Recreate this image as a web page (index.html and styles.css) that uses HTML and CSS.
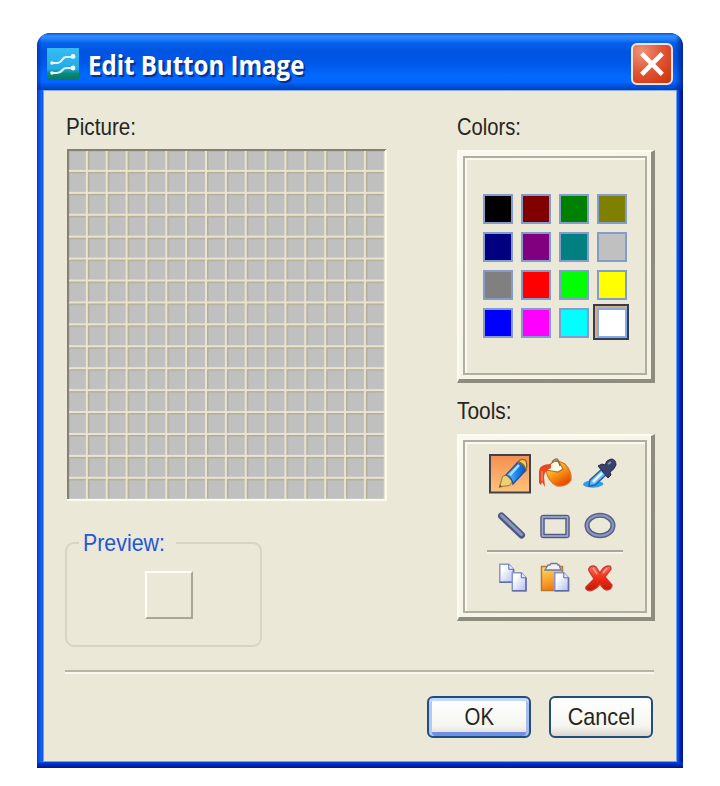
FILE: index.html
```html
<!DOCTYPE html>
<html lang="en">
<head>
<meta charset="utf-8">
<title>Edit Button Image</title>
<link rel="stylesheet" href="styles.css">
</head>
<body>
<main class="window">
  <header class="titlebar">
    <svg class="app-icon" width="32" height="32" viewBox="0 0 32 32">
      <defs><linearGradient id="sky" x2="0" y2="1"><stop offset="0" stop-color="#35bdf5"/><stop offset=".65" stop-color="#26a9e2"/><stop offset=".8" stop-color="#078b78"/><stop offset="1" stop-color="#087564"/></linearGradient></defs>
      <path fill="url(#sky)" d="M0 0h32v32H0z"/>
      <path fill="none" stroke="#d9f4ff" stroke-width="2.200" stroke-linecap="round" d="M5 15h5q3 0 5-3t4-3h7M5 25h5q3 0 5-2.500t4-2.500h7"/>
      <g fill="#effbff"><circle cx="26" cy="8.500" r="2.400"/><circle cx="26" cy="20" r="2.400"/><circle cx="5" cy="15" r="1.800"/><circle cx="5" cy="25" r="1.800"/></g>
    </svg>
    <h1 class="title">Edit Button Image</h1>
    <button class="close" aria-label="Close">
      <svg width="26" height="26" viewBox="0 0 24 24"><path d="M2.500 2.500l19 19M21.500 2.500l-19 19" stroke="#fff" stroke-width="4.200"/></svg>
    </button>
  </header>
  <div class="content">
    <div class="columns">
      <section class="left">
        <h2 class="label picture-label">Picture:</h2>
        <svg class="pixel-grid" width="320" height="352" viewBox="0 0 320 352">
          <defs>
            <pattern id="cell" x="1" y="1" width="19.86" height="21.92" patternUnits="userSpaceOnUse">
              <path fill="#c0c0c0" d="M0 0h20v22H0z"/>
              <path fill="#b3ae98" d="M0 0h1.500v22H0zM0 0h20v1.500H0z"/>
              <path fill="#e8e4ce" d="M17.860 0h2v22h-2zM0 19.920h20v2H0z"/>
            </pattern>
          </defs>
          <path fill="#c0c0c0" d="M1 1h318v350H1z"/>
          <path fill="url(#cell)" d="M1 1h317v349H1z"/>
          <path fill="#838374" d="M0 0h319v2H2v348H0z"/>
          <path fill="#fcfaf0" d="M318 1h2v351H0v-2h318z"/>
        </svg>
        <fieldset class="preview">
          <legend><span class="label preview-label">Preview:</span></legend>
          <div class="preview-tile"></div>
        </fieldset>
      </section>
      <section class="right">
        <h2 class="label colors-label">Colors:</h2>
        <div class="panel colors-panel"><div class="panel-inner">
          <div class="swatches">
            <i class="swatch black"></i><i class="swatch maroon"></i><i class="swatch green"></i><i class="swatch olive"></i>
            <i class="swatch navy"></i><i class="swatch purple"></i><i class="swatch teal"></i><i class="swatch silver"></i>
            <i class="swatch gray"></i><i class="swatch red"></i><i class="swatch lime"></i><i class="swatch yellow"></i>
            <i class="swatch blue"></i><i class="swatch fuchsia"></i><i class="swatch aqua"></i><i class="swatch white selected"></i>
          </div>
        </div></div>
        <h2 class="label tools-label">Tools:</h2>
        <div class="panel tools-panel"><div class="panel-inner">
          <svg class="tools" width="180" height="170" viewBox="465 442 180 170">
            <defs>
              <linearGradient id="hot" x2="0" y2="1"><stop stop-color="#f58e50"/><stop offset="1" stop-color="#ffc47c"/></linearGradient>
              <linearGradient id="blue"><stop stop-color="#73c8ff"/><stop offset=".5" stop-color="#2589ed"/><stop offset="1" stop-color="#0751bd"/></linearGradient>
              <linearGradient id="paint" x2=".6" y2="1"><stop stop-color="#ffe48a"/><stop offset=".45" stop-color="#ffad1c"/><stop offset="1" stop-color="#e94a00"/></linearGradient>
              <linearGradient id="board" x2=".3" y2="1"><stop stop-color="#ffe063"/><stop offset="1" stop-color="#f47c10"/></linearGradient>
              <linearGradient id="paper" x2="1" y2="1"><stop offset=".25" stop-color="#fff"/><stop offset="1" stop-color="#b2bdef"/></linearGradient>
              <linearGradient id="cross" x2="0" y2="1"><stop stop-color="#f77061"/><stop offset=".5" stop-color="#f02d15"/><stop offset="1" stop-color="#c91408"/></linearGradient>
              <g id="sheet"><path fill="url(#paper)" stroke="#8795ce" stroke-width="1.500" d="M.8.8h9l4.700 5v13H.8z"/><path fill="#e7ebff" stroke="#5968a5" d="M9.800.8v5h4.700"/><path fill="none" stroke="#626da5" stroke-width="1.500" d="M14.500 5.800v13H.8"/></g>
            </defs>
            <path fill="url(#hot)" stroke="#40434b" stroke-width="2" d="M490 455h40v37.500h-40z"/>
            <path fill="#f0cf79" stroke="#a58b4d" stroke-width="1.300" d="M499.500 487l3-10.500 4-1.500 6 6-3 4.500z"/><path fill="#635443" d="M499 487.500l1-3 2 2z"/>
            <path fill="url(#blue)" stroke="#274f91" stroke-width="1.300" d="M506 475l12-13q7 1 8 8l-13 14q-1-7-7-9z"/>
            <path fill="#f4cd50" stroke="#846a35" stroke-width="1.300" d="M518 462q3-4 7-2 3 3 1 10-2-7-8-8z"/><path stroke="#a8e0ff" stroke-width="2.500" d="M510 475l9-10"/>

            <path fill="url(#paint)" stroke="#d87825" stroke-width="1.200" d="M546 470l10-10 9 4q7 8 6 16-4 7-14 6-9-4-11-16z"/>
            <path fill="#fffce8" stroke="#9c793d" stroke-width="1.200" d="M546 470q3-6 9-9l4 1 4 7-5 3-6-1z"/>
            <path fill="none" stroke="#806c56" stroke-width="1.300" d="M552 462q4-5 6-2l2 6"/>
            <path fill="#e84722" d="M551 464q-12 0-12 8v11l2 2 1-3 3 5-1-10q0-6 7-9z"/>
            <path stroke="#ff8763" stroke-width="1.300" d="M542 471v10"/>

            <path fill="#2a9ff0" d="M583 484q3-5 14-3 8 1 6 4-6 4-16 2-4-1-4-3z"/>
            <path fill="#63b9fa" stroke="#315da2" stroke-width="1.500" d="M589 486l1-6 12-11 5 5-12 11z"/>
            <path fill="#39416d" stroke="#28294b" d="M598 466l4-2 3 1q1-5 6-6 5 0 5 6-2 5-6 7l1 3-3 3z"/><path stroke="#8991bb" stroke-width="2" d="M608 464l3-2"/><path stroke="#e3f8ff" stroke-width="2.500" d="M593 482l9-9"/>

            <g fill="none" stroke-linecap="round">
              <path stroke="#4e5887" stroke-width="7" d="M501.500 516l20 19"/><path stroke="#8b96bb" stroke-width="3" d="M501.500 515.500l20 19"/>
              <rect x="542.500" y="517" width="25" height="19" rx="1" stroke="#505b89" stroke-width="4.500"/><rect x="542.500" y="517" width="25" height="19" stroke="#a2abc8" stroke-width="1.600"/>
              <ellipse cx="600" cy="525.500" rx="13" ry="10.300" stroke="#56608c" stroke-width="5"/><ellipse cx="600" cy="525.500" rx="13" ry="10.300" stroke="#8f99bb" stroke-width="2"/>
            </g>
            <path fill="#a8a796" d="M487 550h136v2H487z"/><path fill="#faf8ee" d="M487 552h136v1.500H487z"/>
            <use href="#sheet" x="499" y="563.500"/><use href="#sheet" x="511.500" y="572"/>
            <path fill="url(#board)" stroke="#b37930" stroke-width="1.500" d="M541.500 566.500h21v24h-21z"/>
            <path fill="#eef0fa" stroke="#737896" stroke-width="1.300" d="M545 570l3-5h2l1-1.500h6l1 1.500h1l2 5z"/>
            <use href="#sheet" x="554" y="572"/>
            <path fill="url(#cross)" stroke="#c73a2c" stroke-width="1.300" d="M590 567q3-2 6 0l4 6q3-6 8-7 3-1 3 3l-6 8 7 8q0 5-6 5-3-1-6-6-3 4-7 6-5 2-7-1-1-2 2-4l6-6-5-8q-1-2 1-4z"/>
            <path stroke="#ff9c86" stroke-width="1.500" d="M593 568l4 6m10-6l-4 5"/>
          </svg>
        </div></div>
      </section>
    </div>
    <hr class="divider">
    <footer class="actions">
      <button class="btn default"><span class="label ok-label">OK</span></button>
      <button class="btn"><span class="label cancel-label">Cancel</span></button>
    </footer>
  </div>
</main>
</body>
</html>
```
FILE: styles.css
```css
* { box-sizing: border-box; }
body { margin: 0; padding: 33px 37px 0; background: #fff; font-family: "Liberation Sans", sans-serif; }
.window {
  width: 646px; height: 735px; border-radius: 13px 13px 0 0; overflow: hidden;
  padding: 0 6px 6px;
  background: linear-gradient(transparent 729px, rgba(0,54,213,.95) 730px, #0029b4 732px, #001488 735px),
    linear-gradient(90deg, #0238c8 0, #0b5af0 3px, #1763ee 5px, #0648d8 7px, #0648d8 639px, #1052ea 641px, #0024b4 643px, #00138c 100%);
  display: flex; flex-direction: column;
}
.titlebar {
  height: 57px; flex: none; margin: 0 -6px; padding: 0 10px; display: flex; align-items: center;
  border-radius: 13px 13px 0 0;
  background: linear-gradient(90deg, rgba(0,34,170,.6), transparent 5px, transparent 638px, rgba(0,20,130,.75)),
    linear-gradient(#0a50d6 0, #318cff 3px, #2280fa 6px, #0660ea 10px, #0054e1 18px, #0056e7 29px, #0268fc 42px, #0267ff 49px, #0051dc 53px, #0040bd 57px);
}
.app-icon { margin-top: 4px; flex: none; }
.title {
  margin: 7px auto 0 9px; color: #fff; font: bold 26px/36px "Open Sans", sans-serif; white-space: nowrap;
  text-shadow: 2px 2px 1px #062f94; width: 220px; transform: scaleX(.925); transform-origin: 0 50%;
}
.close {
  width: 42px; height: 42px; margin: 5px 0 0; padding: 0; border: 2px solid #f3e4ec; border-radius: 6px;
  background: radial-gradient(circle at 22% 18%, #ee9476, #e2583a 45%, #d63d16 80%, #bd3416); display: grid; place-items: center;
}
.content {
  flex: 1; min-height: 0; background: #ebe8d8; border: 1px solid #6da0ea; border-top-color: #8eb1e4;
  padding: 21px 23px 0 21px;
}
.columns { display: flex; justify-content: space-between; height: 558px; margin-right: -2px; }
.left { width: 321px; }
.right { width: 198px; }
.label { display: block; margin: 0; font-weight: normal; font-size: 24px; line-height: 30px; color: #25251f; white-space: nowrap; transform-origin: 0 50%; width: max-content; }
.picture-label { margin-left: 1px; transform: scaleX(.86); }
.pixel-grid { display: block; margin: 7px 0 0 2px; }
.preview {
  width: 197px; height: 119px; margin: 27px 0 0; padding: 0; border: 2px solid #d6d5c3; border-radius: 9px;
}
.preview legend { margin-left: 12px; padding: 0 0 0 4px; width: 97px; height: 30px; }
.preview-label { color: #2456d6; transform: scaleX(.89); }
.preview-tile { width: 48px; height: 48px; margin: 13px 0 0 78px; border: 2px solid; border-color: #fffdf4 #aaa894 #aaa894 #fffdf4; }
.colors-label { transform: scaleX(.84); }
.panel {
  width: 198px; border: 4px solid; border-width: 2px 4px 4px 2px; border-color: #fdfcf3 #8e8d7d #8e8d7d #fdfcf3; padding: 4px;
  background: linear-gradient(135deg, #fbf9ed, #f4f1e3);
}
.panel-inner { height: 100%; background: #ebe8d8; border: 2px solid #b0ae9e; box-shadow: inset 2px 2px #fcfaf0; }
.colors-panel { height: 233px; margin-top: 8px; }
.swatches { display: grid; grid-template-columns: repeat(4, 30px); gap: 8px; padding: 36px 0 0 18px; }
.swatch { height: 30px; border: 2px solid #829dcc; }
.black { background: #000; } .maroon { background: #800000; } .green { background: #008000; } .olive { background: #808000; }
.navy { background: #000080; } .purple { background: #800080; } .teal { background: #008080; } .silver { background: #c0c0c0; }
.gray { background: #808080; } .red { background: #f00; } .lime { background: #0f0; } .yellow { background: #ff0; }
.blue { background: #00f; } .fuchsia { background: #f0f; } .aqua { background: #0ff; } .white { background: #fff; }
/* Selection frame extends further to the top left than to the bottom right. */
.selected { border-color: #86a9e8; box-shadow: -1px -1px 0 1px #dfaa7c, -1px -1px 0 3px #343e50; }
.tools-label { margin-top: 13px; transform: scaleX(.87); }
.tools-panel { height: 187px; margin-top: 8px; }
.tools { display: block; }
.divider { height: 4px; margin: 0 -1px 0 0; border: 0; background: linear-gradient(#b6b4a2 2px, #faf8ed 2px); }
.actions { display: flex; justify-content: flex-end; gap: 18px; margin: 22px 0 0; }
.btn {
  width: 104px; height: 42px; padding: 0; border: 2px solid #244d7f; border-radius: 6px;
  background: linear-gradient(#fff, #f5f5f0 75%, #dcd6cc); display: flex; align-items: center; justify-content: center;
}
.btn .label { font-family: "Liberation Sans", sans-serif; transform-origin: 50% 50%; }
.default { box-shadow: inset 0 3px #c1d8ff, inset 3px 0 #b0c9f5, inset -3px 0 #a4bded, inset 0 -4px #6f91e4; }
.btn .ok-label { transform: scaleX(.85); }
.btn .cancel-label { transform: scaleX(.9); }
```
